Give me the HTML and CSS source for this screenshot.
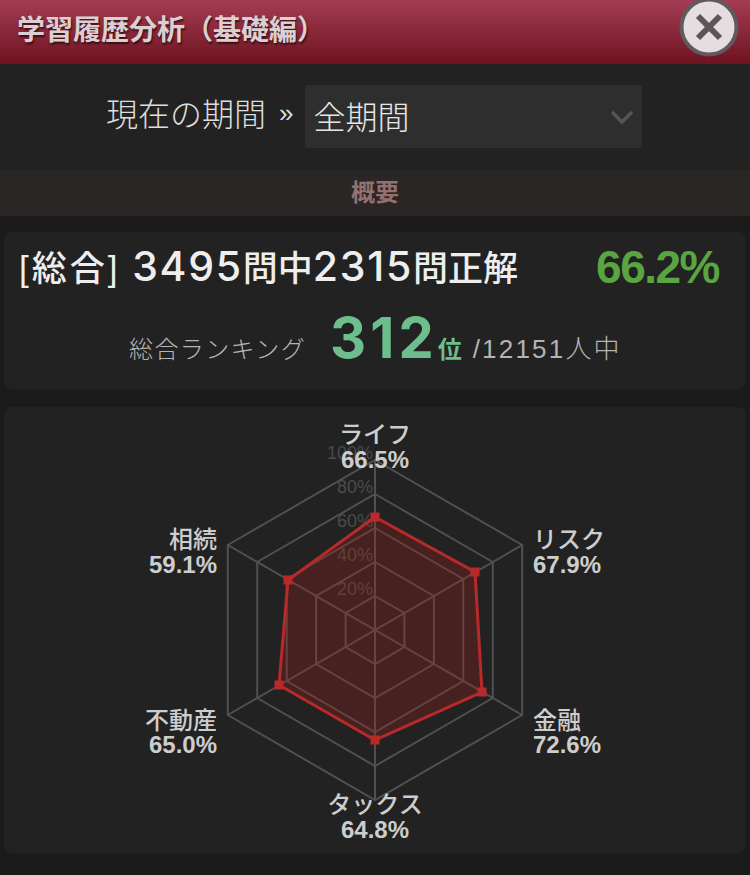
FILE: index.html
```html
<!DOCTYPE html>
<html lang="ja">
<head>
<meta charset="utf-8">
<title>学習履歴分析(基礎編)</title>
<link rel="stylesheet" href="styles.css">
</head>
<body>
<header class="topbar">
  <h1 class="title">学習履歴分析(基礎編)</h1>
  <div class="close">
    <svg viewBox="0 0 60 60" width="60" height="60" aria-hidden="true">
      <circle cx="30" cy="30" r="27.5" fill="#e6dde0" stroke="#5f5a5c" stroke-width="4"/>
      <path d="M19 19 L41 41 M41 19 L19 41" stroke="#5b5658" stroke-width="6" fill="none"/>
    </svg>
  </div>
</header>
<div class="period">
  <span class="period-label">現在の期間</span>
  <span class="period-arrow">»</span>
  <div class="select">
    <span class="select-value">全期間</span>
    <svg viewBox="0 0 24 14" width="24" height="14" aria-hidden="true"><path d="M2 2 L12 12 L22 2" fill="none" stroke="#555" stroke-width="3.5"/></svg>
  </div>
</div>
<div class="band">概要</div>
<section class="card summary">
  <div class="summary-top">
    <span class="total"><span class="tag">[総合]</span> <span class="digits">3495</span>問中<span class="digits">2315</span>問正解</span>
    <span class="rate">66.2%</span>
  </div>
  <div class="rank">
    <span class="rank-label">総合ランキング</span>
    <span class="rank-num">312</span><span class="rank-unit">位</span>
    <span class="rank-of">/12151人中</span>
  </div>
</section>
<section class="card chart">
  <svg class="radar" viewBox="0 0 750 446" width="750" height="446">
    <g transform="translate(0 -407)">
      <g class="grid">
        <polygon points="375,596 404.4,613 404.4,647 375,664 345.6,647 345.6,613"/>
        <polygon points="375,562 433.9,596 433.9,664 375,698 316.1,664 316.1,596"/>
        <polygon points="375,528 463.3,579 463.3,681 375,732 286.7,681 286.7,579"/>
        <polygon points="375,494 492.8,562 492.8,698 375,766 257.2,698 257.2,562"/>
        <polygon points="375,460 522.2,545 522.2,715 375,800 227.8,715 227.8,545"/>
        <path d="M375 460V800M522.2 545L227.8 715M522.2 715L227.8 545"/>
      </g>
      <g class="ticks">
        <text x="373" y="459">100%</text>
        <text x="373" y="493">80%</text>
        <text x="373" y="527">60%</text>
        <text x="373" y="561">40%</text>
        <text x="373" y="595">20%</text>
      </g>
      <polygon class="area" points="375,517 475,572 482,692 375,740 279,685 288,580"/>
      <g class="dots">
        <rect x="370.5" y="512.5" width="9" height="9"/>
        <rect x="470.5" y="567.5" width="9" height="9"/>
        <rect x="477.5" y="687.5" width="9" height="9"/>
        <rect x="370.5" y="735.5" width="9" height="9"/>
        <rect x="274.5" y="680.5" width="9" height="9"/>
        <rect x="283.5" y="575.5" width="9" height="9"/>
      </g>
      <g class="labels">
        <text class="mid" x="375" y="443">ライフ</text>
        <text class="mid num" x="375" y="468">66.5%</text>
        <text x="533" y="548">リスク</text>
        <text class="num" x="533" y="573">67.9%</text>
        <text x="533" y="729">金融</text>
        <text class="num" x="533" y="753">72.6%</text>
        <text class="mid" x="375" y="813">タックス</text>
        <text class="mid num" x="375" y="838">64.8%</text>
        <text class="end" x="217" y="729">不動産</text>
        <text class="end num" x="217" y="753">65.0%</text>
        <text class="end" x="217" y="548">相続</text>
        <text class="end num" x="217" y="573">59.1%</text>
      </g>
    </g>
  </svg>
</section>
</body>
</html>
```
FILE: styles.css
```css
* { box-sizing: border-box; }
html, body { margin: 0; padding: 0; }
body {
  width: 750px;
  height: 875px;
  overflow: hidden;
  background: #1b1b1b;
  font-family: "Liberation Sans", "Noto Sans CJK JP", sans-serif;
  color: #ddd;
}
.topbar {
  position: relative;
  height: 64px;
  background: linear-gradient(#a33c53, #6f1320);
  display: flex;
  align-items: center;
  padding: 0 0 8px 17px;
}
.title {
  margin: 0;
  font-family: "Noto Sans CJK JP", sans-serif;
  font-size: 28px;
  font-weight: 700;
  line-height: 1;
  color: #dccfd2;
  text-shadow: 1px 2px 2px rgba(0, 0, 0, .6);
  font-feature-settings: "fwid";
}
.close {
  position: absolute;
  left: 679px;
  top: -3px;
  width: 60px;
  height: 60px;
}
.close svg { display: block; }
.period {
  height: 106px;
  background: #222;
  display: flex;
  align-items: center;
  padding: 0 0 0 106px;
}
.period-label {
  font-size: 32px;
  font-weight: 300;
  color: #ddd;
  margin-top: -11px;
  margin-right: 13px;
  white-space: nowrap;
}
.period-arrow {
  font-size: 26px;
  color: #ddd;
  margin-top: -8px;
  margin-right: 12px;
}
.select {
  width: 337px;
  height: 63px;
  margin-top: -1px;
  background: #2e2e2e;
  border-radius: 2px;
  display: flex;
  align-items: center;
  justify-content: space-between;
  padding: 0 8px 0 8px;
  font-size: 32px;
  font-weight: 300;
  color: #e6e6e6;
}
.select-value { margin-top: -4px; }
.band {
  height: 46px;
  background: #2a2625;
  color: #94706f;
  font-size: 24px;
  font-weight: 700;
  text-align: center;
  line-height: 46px;
}
.card {
  margin: 16px 4px 0;
  background: #222;
  border-radius: 8px;
}
.summary {
  height: 157px;
  padding: 8px 27px 0 15px;
}
.summary-top {
  display: flex;
  justify-content: space-between;
  align-items: center;
  height: 50px;
}
.total {
  font-size: 35px;
  font-weight: 500;
  color: #eee;
  white-space: nowrap;
}
.tag { letter-spacing: 3px; margin-right: 2px; }
.digits {
  font-family: Inter, "Liberation Sans", sans-serif;
  font-size: 41px;
  font-weight: 500;
  letter-spacing: 1.7px;
}
.rate {
  font-size: 46px;
  font-weight: 700;
  color: #5aa441;
  letter-spacing: -1.5px;
  margin-top: 3px;
}
.rank {
  display: flex;
  align-items: baseline;
  margin-top: 14px;
  padding-left: 110px;
  white-space: nowrap;
  color: #b4b4b4;
}
.rank-label { font-size: 24px; font-weight: 300; letter-spacing: 1.4px; margin-right: 24px; }
.rank-num { font-size: 56px; font-weight: 700; color: #6dbe8c; font-family: Inter, "Liberation Sans", sans-serif; letter-spacing: 4px; }
.rank-unit { font-size: 24px; font-weight: 700; color: #6dbe8c; margin-right: 11px; }
.rank-of { font-size: 26px; font-weight: 300; letter-spacing: 2.2px; }
.chart {
  margin-top: 18px;
  height: 446px;
}
.radar {
  display: block;
  margin-left: -4px;
}
.grid polygon, .grid path { fill: none; stroke: #505050; stroke-width: 2; }
.ticks text { font-size: 18px; fill: #4b4b4b; text-anchor: end; }
.area { fill: rgba(170, 30, 30, .28); stroke: #b82a2a; stroke-width: 3; }
.dots rect { fill: #b82a2a; }
.labels text { font-size: 24px; font-weight: 500; fill: #cdcdcd; }
.labels .num { font-weight: 700; }
.labels .mid { text-anchor: middle; }
.labels .end { text-anchor: end; }
```
